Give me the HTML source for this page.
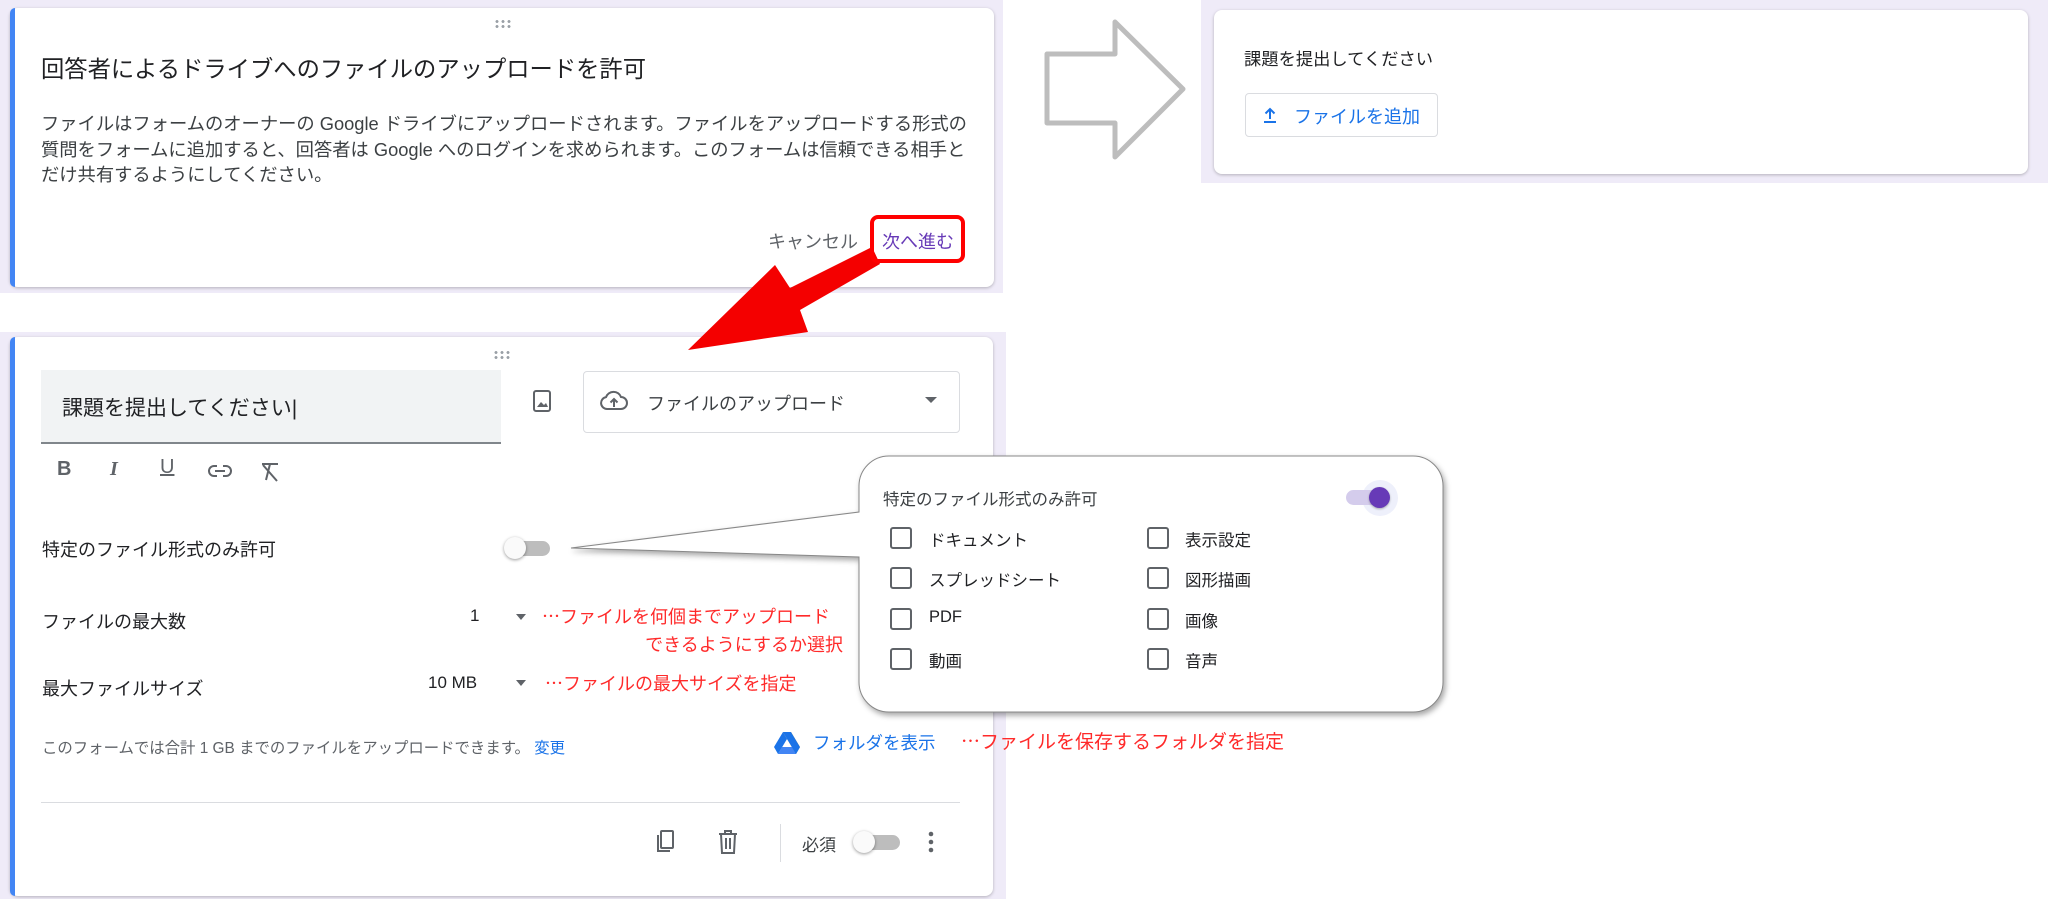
<!DOCTYPE html>
<html><head><meta charset="utf-8"><style>
*{margin:0;padding:0;box-sizing:border-box}
body{width:2048px;height:899px;background:#fff;position:relative;overflow:hidden;font-family:"Liberation Sans","Noto Sans CJK JP",sans-serif;color:#202124}
.a{position:absolute;white-space:nowrap}
.frame{position:absolute;background:#efebf8}
.card{position:absolute;background:#fff;border-radius:8px;box-shadow:0 1px 3px rgba(0,0,0,.25)}
.blue{position:absolute;left:0;top:0;bottom:0;width:5px;background:#4285f4;border-radius:8px 0 0 8px}
.red{color:#ff2a2a;font-family:"Noto Sans CJK JP",sans-serif}
.cb{position:absolute;width:22px;height:22px;border:2px solid #5f6368;border-radius:3px}
.dots{position:absolute;width:18px;height:10px;background:radial-gradient(circle,#9aa0a6 1.3px,transparent 1.6px) 0 0/6px 5px}
</style></head><body>

<!-- top-left card -->
<div class="frame" style="left:0;top:0;width:1003px;height:293px"></div>
<div class="card" style="left:10px;top:8px;width:984px;height:279px"><div class="blue"></div></div>
<div class="dots" style="left:494px;top:19px"></div>
<div class="a" style="left:41px;top:50px;font-size:23.3px">回答者によるドライブへのファイルのアップロードを許可</div>
<div class="a" style="left:41px;top:111px;font-size:18.3px;line-height:25.5px;color:#3c4043">ファイルはフォームのオーナーの Google ドライブにアップロードされます。ファイルをアップロードする形式の<br>質問をフォームに追加すると、回答者は Google へのログインを求められます。このフォームは信頼できる相手と<br>だけ共有するようにしてください。</div>
<div class="a" style="left:768px;top:228px;font-size:18px;color:#5f6368">キャンセル</div>
<div class="a" style="left:882px;top:228px;font-size:18px;color:#673ab7">次へ進む</div>

<!-- right top card -->
<div class="frame" style="left:1201px;top:0;width:847px;height:183px"></div>
<div class="card" style="left:1214px;top:10px;width:814px;height:164px"></div>
<div class="a" style="left:1244px;top:45px;font-size:17.3px">課題を提出してください</div>
<div class="a" style="left:1245px;top:93px;width:193px;height:44px;border:1px solid #dadce0;border-radius:4px"></div>
<svg class="a" style="left:1261px;top:105px" width="18" height="20" viewBox="0 0 18 20"><path d="M9 14V4M4.5 8.5L9 4l4.5 4.5M3 17h12" fill="none" stroke="#1a73e8" stroke-width="2"/></svg>
<div class="a" style="left:1294px;top:103px;font-size:18px;color:#1a73e8">ファイルを追加</div>

<!-- gray outline arrow -->
<svg class="a" style="left:1040px;top:15px" width="150" height="150" viewBox="1040 15 150 150"><path d="M1047 54H1115V22L1183 89L1115 157V123H1047Z" fill="#fff" stroke="#bdbdbd" stroke-width="5" stroke-linejoin="round"/></svg>

<!-- bottom card -->
<div class="frame" style="left:0;top:332px;width:1006px;height:567px"></div>
<div class="card" style="left:10px;top:337px;width:983px;height:559px"><div class="blue"></div></div>
<div class="dots" style="left:493px;top:350px"></div>
<div class="a" style="left:41px;top:370px;width:460px;height:74px;background:#f1f3f4;border-bottom:2px solid #80868b"></div>
<div class="a" style="left:62px;top:392px;font-size:21px">課題を提出してください<span style="font-weight:100">|</span></div>
<svg class="a" style="left:531px;top:389px" width="22" height="24" viewBox="0 0 22 24"><rect x="3" y="2" width="16" height="20" rx="2" fill="none" stroke="#5f6368" stroke-width="2"/><path d="M6 18l4-5 3 3 2-2 2 4z" fill="#5f6368"/></svg>
<div class="a" style="left:583px;top:371px;width:377px;height:62px;border:1px solid #dadce0;border-radius:4px"></div>
<svg class="a" style="left:600px;top:389px" width="28" height="24" viewBox="0 0 28 24"><path d="M7 20a6 6 0 0 1-1-11.9A8 8 0 0 1 21 8a6 6 0 0 1 0 12z" fill="none" stroke="#5f6368" stroke-width="2"/><path d="M14 18v-8M10.5 13.5L14 10l3.5 3.5" fill="none" stroke="#5f6368" stroke-width="2"/></svg>
<div class="a" style="left:647px;top:390px;font-size:18px;color:#3c4043">ファイルのアップロード</div>
<div class="a" style="left:925px;top:397px;border:6px solid transparent;border-top:6px solid #5f6368;border-bottom:0"></div>
<div class="a" style="left:57px;top:458px;font-size:20px;font-weight:bold;color:#5f6368">B</div>
<div class="a" style="left:110px;top:458px;font-size:20px;font-style:italic;font-weight:bold;color:#5f6368;font-family:'Liberation Serif',serif">I</div>
<div class="a" style="left:160px;top:456px;font-size:20px;text-decoration:underline;color:#5f6368">U</div>
<svg class="a" style="left:207px;top:462px" width="26" height="18" viewBox="0 0 26 18"><path d="M10 4H7a5 5 0 0 0 0 10h3M16 4h3a5 5 0 0 1 0 10h-3M8 9h10" fill="none" stroke="#5f6368" stroke-width="2"/></svg>
<svg class="a" style="left:258px;top:460px" width="24" height="24" viewBox="0 0 24 24"><path d="M4 4h16M12 4l-4 16M5 5l14 16" fill="none" stroke="#5f6368" stroke-width="2"/></svg>
<div class="a" style="left:42px;top:536px;font-size:18px">特定のファイル形式のみ許可</div>
<div class="a" style="left:510px;top:541px;width:40px;height:15px;border-radius:8px;background:#bdbdbd"></div>
<div class="a" style="left:504px;top:537px;width:22px;height:22px;border-radius:50%;background:#fafafa;box-shadow:0 1px 3px rgba(0,0,0,.4)"></div>
<div class="a" style="left:42px;top:608px;font-size:18px">ファイルの最大数</div>
<div class="a" style="left:470px;top:606px;font-size:17px">1</div>
<div class="a" style="left:516px;top:614px;border:5px solid transparent;border-top:6px solid #5f6368;border-bottom:0"></div>
<div class="a red" style="left:542px;top:603px;font-size:18px">…ファイルを何個までアップロード</div>
<div class="a red" style="left:600px;top:631px;width:243px;text-align:right;font-size:18px">できるようにするか選択</div>
<div class="a" style="left:42px;top:675px;font-size:18px">最大ファイルサイズ</div>
<div class="a" style="left:428px;top:673px;font-size:17px">10 MB</div>
<div class="a" style="left:516px;top:680px;border:5px solid transparent;border-top:6px solid #5f6368;border-bottom:0"></div>
<div class="a red" style="left:545px;top:670px;font-size:18px">…ファイルの最大サイズを指定</div>
<div class="a" style="left:42px;top:736px;font-size:15.4px;color:#5f6368">このフォームでは合計 1 GB までのファイルをアップロードできます。 <span style="color:#1a73e8">変更</span></div>
<svg class="a" style="left:774px;top:732px" width="26" height="23" viewBox="0 0 26 23"><path d="M9 0h8l9 15-4 7z" fill="#fbbc04"/><path d="M9 0L0 15l4 7 9-15z" fill="#1a73e8"/><path d="M4 22h18l4-7H8z" fill="#4285f4"/><path d="M9 0h8l9 15-4 7-9-15z" fill="#1a73e8"/></svg>
<div class="a" style="left:813px;top:730px;font-size:17.5px;color:#1a73e8">フォルダを表示</div>
<div class="a red" style="left:961px;top:727px;font-size:19px">…ファイルを保存するフォルダを指定</div>
<div class="a" style="left:41px;top:802px;width:919px;height:1px;background:#dadce0"></div>
<svg class="a" style="left:654px;top:829px" width="24" height="26" viewBox="0 0 24 26"><rect x="7" y="2" width="12" height="17" rx="1" fill="none" stroke="#5f6368" stroke-width="2"/><path d="M4 6v16h12" fill="none" stroke="#5f6368" stroke-width="2"/></svg>
<svg class="a" style="left:716px;top:829px" width="24" height="26" viewBox="0 0 24 26"><path d="M3 5h18M9 5V2h6v3M5 5l1 19h12l1-19M10 9v11M14 9v11" fill="none" stroke="#5f6368" stroke-width="2"/></svg>
<div class="a" style="left:780px;top:824px;width:1px;height:38px;background:#dadce0"></div>
<div class="a" style="left:802px;top:831px;font-size:17px;color:#3c4043">必須</div>
<div class="a" style="left:860px;top:835px;width:40px;height:15px;border-radius:8px;background:#bdbdbd"></div>
<div class="a" style="left:853px;top:831px;width:22px;height:22px;border-radius:50%;background:#fafafa;box-shadow:0 1px 3px rgba(0,0,0,.4)"></div>
<svg class="a" style="left:925px;top:830px" width="12" height="24" viewBox="0 0 12 24"><circle cx="6" cy="4" r="2.3" fill="#5f6368"/><circle cx="6" cy="12" r="2.3" fill="#5f6368"/><circle cx="6" cy="20" r="2.3" fill="#5f6368"/></svg>

<!-- red arrow (on top of cards) -->
<svg class="a" style="left:0;top:0" width="2048" height="899" viewBox="0 0 2048 899"><path d="M688 350L775 265L790 288L872 247L880 264L800 310L808 332Z" fill="#f40000"/></svg>
<div class="a" style="left:870px;top:215px;width:95px;height:48px;border:4px solid #f00;border-radius:8px"></div>

<!-- popup bubble -->
<svg class="a" style="left:0;top:0;filter:drop-shadow(2px 3px 3px rgba(0,0,0,.35))" width="2048" height="899" viewBox="0 0 2048 899"><path d="M889 456H1413A30 30 0 0 1 1443 486V682A30 30 0 0 1 1413 712H889A30 30 0 0 1 859 682V557L571 548L859 512V486A30 30 0 0 1 889 456Z" fill="#fff" stroke="#888" stroke-width="1"/></svg>
<div class="a" style="left:883px;top:486px;font-size:16.5px;color:#3c4043">特定のファイル形式のみ許可</div>
<div class="a" style="left:1362px;top:480px;width:36px;height:36px;border-radius:50%;background:#eef0fb"></div>
<div class="a" style="left:1346px;top:490px;width:40px;height:15px;border-radius:8px;background:#d4ccec"></div>
<div class="a" style="left:1369px;top:487px;width:21px;height:21px;border-radius:50%;background:#673ab7;box-shadow:0 1px 2px rgba(0,0,0,.3)"></div>
<div class="cb" style="left:890px;top:527px"></div><div class="a" style="left:929px;top:527px;font-size:16.5px">ドキュメント</div>
<div class="cb" style="left:890px;top:567px"></div><div class="a" style="left:929px;top:567px;font-size:16.5px">スプレッドシート</div>
<div class="cb" style="left:890px;top:608px"></div><div class="a" style="left:929px;top:608px;font-size:16.5px">PDF</div>
<div class="cb" style="left:890px;top:648px"></div><div class="a" style="left:929px;top:648px;font-size:16.5px">動画</div>
<div class="cb" style="left:1147px;top:527px"></div><div class="a" style="left:1185px;top:527px;font-size:16.5px">表示設定</div>
<div class="cb" style="left:1147px;top:567px"></div><div class="a" style="left:1185px;top:567px;font-size:16.5px">図形描画</div>
<div class="cb" style="left:1147px;top:608px"></div><div class="a" style="left:1185px;top:608px;font-size:16.5px">画像</div>
<div class="cb" style="left:1147px;top:648px"></div><div class="a" style="left:1185px;top:648px;font-size:16.5px">音声</div>
</body></html>
